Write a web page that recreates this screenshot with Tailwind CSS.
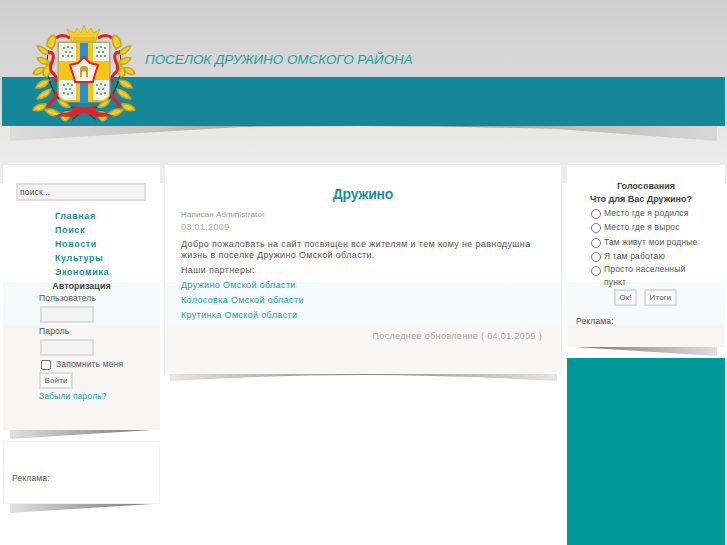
<!DOCTYPE html>
<html lang="ru">
<head>
    <meta charset="UTF-8">
    <title>Поселок Дружино Омского района</title>
    <script src="https://cdn.jsdelivr.net/npm/@tailwindcss/browser@4"></script>
</head>
<body class="relative h-[545px] overflow-hidden bg-white font-['Liberation_Sans',sans-serif] text-[9px] tracking-[0.35px] text-[#555]">

    <!-- Header -->
    <header class="relative h-[165px] bg-[linear-gradient(#cfcfcf,#d6d6d6_50px,#dadada_126px,#e7e7e6_126px,#ececec)]">
        <h1 class="absolute left-[145px] top-[51px] text-[13.4px] leading-[18px] font-normal italic tracking-normal text-[#23a3a0]">ПОСЕЛОК ДРУЖИНО ОМСКОГО РАЙОНА</h1>
        <div class="absolute left-[2px] top-[77px] h-[49px] w-[723px] bg-[#14889a]"></div>
        <svg class="absolute left-[10px] top-[126px]" width="707" height="16" viewBox="0 0 707 16">
            <defs>
                <linearGradient id="hs" x1="0" x2="1" y1="0" y2="0">
                    <stop offset="0" stop-color="#dcdcdc"/>
                    <stop offset="0.2" stop-color="#c4c4c4"/>
                    <stop offset="0.33" stop-color="#a5a5a5"/>
                    <stop offset="0.5" stop-color="#707070"/>
                    <stop offset="0.67" stop-color="#a0a0a0"/>
                    <stop offset="0.8" stop-color="#bdbdbd"/>
                    <stop offset="1" stop-color="#d8d8d8"/>
                </linearGradient>
            </defs>
            <path d="M0 0H707V15L547 3Q450 0 353 0Q270 0 230 1L0 15Z" fill="url(#hs)"/>
        </svg>

        <!-- Coat of arms -->
        <svg class="absolute left-[32px] top-[24px]" width="104" height="98" viewBox="32 24 104 98">
            <g id="side">
                <path d="M72 120L84 110M63 100Q70 110 84 110M48 50Q44 85 62 102" fill="none" stroke="#4a3a20" stroke-width="1.2"/>
                <g fill="#efd02c" stroke="#c7a81e" stroke-width="1.5" stroke-linejoin="round">
                    <path d="M47 46Q47 37 54 35Q58 42 52 49Z"/>
                    <path d="M37 46Q44 46 50 54Q42 56 37 46Z"/>
                    <path d="M37 58Q44 56 50 63Q42 67 37 58Z"/>
                    <path d="M33 74Q36 66 44 68Q42 76 33 74Z"/>
                    <path d="M43 75Q43 68 49 64Q52 71 47 77Z"/>
                    <path d="M36 88Q38 80 49 80Q47 88 36 88Z"/>
                    <path d="M37 99Q41 91 51 89Q49 98 37 99Z"/>
                    <path d="M33 110Q36 103 46 104Q44 113 33 110Z"/>
                    <path d="M45 110Q52 107 60 114Q52 119 45 110Z"/>
                    <path d="M61 117Q63 111 69 112Q72 118 65 121Q62 120 61 117Z"/>
                    <path d="M58 100Q64 99 70 107Q62 109 58 100Z"/>
                </g>
                <path d="M70 38Q62 33 56 38M48 52Q56 52 52 62Q48 70 54 74Q58 78 55 82" fill="none" stroke="#e3212b" stroke-width="3"/>
                <path d="M48 107L58 92" fill="none" stroke="#e3212b" stroke-width="3.5"/>
                <path d="M54 116Q64 112 72 112L73 106L84 108V113L72 117Z" fill="#e3212b"/>
            </g>
            <use href="#side" transform="translate(168 0) scale(-1 1)"/>

            <!-- crown -->
            <path d="M72 42L67 29L74 33L77 28L81 33L84 25L87 33L91 28L94 33L100 29L95 42Z" fill="#f3cf2a" stroke="#c9a414" stroke-width="0.6"/>
            <rect x="73" y="37" width="22" height="5" fill="#e6bd22"/>

            <!-- shield -->
            <path d="M58 42H110V92Q110 102 100 102H68Q58 102 58 92Z" fill="#f5c518" stroke="#9a9a9a" stroke-width="1"/>
            <rect x="80" y="43" width="8" height="59" fill="#2a8fd0"/>
            <path d="M59 43H76V61H59ZM93 43H109V61H93ZM59 80H76V100H68Q59 100 59 92ZM93 80H109V92Q109 100 100 100H93Z" fill="#f4f4ee"/>
            <g fill="#1f8a5a">
                <circle cx="64" cy="48" r="0.9"/><circle cx="68" cy="47" r="0.9"/><circle cx="72" cy="48" r="0.9"/><circle cx="66" cy="52" r="0.9"/><circle cx="70" cy="52" r="0.9"/><circle cx="63" cy="56" r="0.9"/><circle cx="68" cy="56" r="0.9"/><circle cx="72" cy="56" r="0.9"/>
                <circle cx="97" cy="48" r="0.9"/><circle cx="101" cy="47" r="0.9"/><circle cx="105" cy="48" r="0.9"/><circle cx="99" cy="52" r="0.9"/><circle cx="103" cy="52" r="0.9"/><circle cx="97" cy="56" r="0.9"/><circle cx="101" cy="56" r="0.9"/><circle cx="105" cy="56" r="0.9"/>
                <circle cx="64" cy="85" r="0.9"/><circle cx="68" cy="84" r="0.9"/><circle cx="72" cy="85" r="0.9"/><circle cx="66" cy="89" r="0.9"/><circle cx="70" cy="89" r="0.9"/><circle cx="64" cy="93" r="0.9"/><circle cx="68" cy="94" r="0.9"/><circle cx="72" cy="93" r="0.9"/>
                <circle cx="97" cy="85" r="0.9"/><circle cx="101" cy="84" r="0.9"/><circle cx="105" cy="85" r="0.9"/><circle cx="99" cy="89" r="0.9"/><circle cx="103" cy="89" r="0.9"/><circle cx="97" cy="93" r="0.9"/><circle cx="101" cy="94" r="0.9"/><circle cx="105" cy="93" r="0.9"/>
            </g>

            <!-- star -->
            <path d="M84 57L90 63L98 65L95 74L93 82H75L73 74L70 65L78 63Z" fill="#f7f1e6" stroke="#e3212b" stroke-width="2" stroke-linejoin="round"/>
            <path d="M80 77V68L82 66H86L88 68V77H86V71H82V77Z" fill="#c9a13a"/>
        </svg>
    </header>

    <!-- Columns -->
    <main class="flex items-start bg-[linear-gradient(#ececec_18px,#fff_18px)] pl-[3px]">

        <!-- Left column -->
        <aside class="w-[157px] text-[8.5px] tracking-[0.15px]">
            <div class="h-[265px] bg-[linear-gradient(#fff_117px,#f5fafb_117px,#f6f9fa_160px,#f7f6f5_160px)] pt-[18px]">
                <input class="ml-[13px] block h-[18px] w-[130px] border-2 border-[#ddd] bg-[#f3f3f3] px-[2px] text-[8.5px] text-[#555] placeholder:text-[#555]" placeholder="поиск...">
                <ul class="mt-[8px] ml-[52px] text-[9px] leading-[14px] font-bold tracking-[0.6px] text-[#1f8fa0]">
                    <li>Главная</li>
                    <li>Поиск</li>
                    <li>Новости</li>
                    <li>Культуры</li>
                    <li>Экономика</li>
                </ul>
                <h3 class="mt-[1px] text-center text-[9px] leading-[12px] font-bold tracking-normal text-[#444]">Авторизация</h3>
                <div class="pl-[36px]">
                    <label class="block leading-[12px]">Пользователь</label>
                    <input class="mt-[2px] ml-[1px] block h-[17px] w-[54px] border-2 border-[#ddd] bg-[#f3f3f3]">
                    <label class="mt-[2px] block leading-[12px]">Пароль</label>
                    <input class="mt-[2px] ml-[1px] block h-[17px] w-[54px] border-2 border-[#ddd] bg-[#f3f3f3]">
                    <div class="mt-[3px] ml-[2px] flex h-[11px] items-center gap-[5px]">
                        <span class="h-[10px] w-[10px] rounded-[2px] border border-[#777] bg-white"></span>
                        <span>Запомнить меня</span>
                    </div>
                    <button class="mt-[2px] block h-[17px] w-[34px] border-2 border-[#ddd] bg-[#fafafa] text-[8px]">Войти</button>
                    <a class="mt-[1px] block leading-[12px] text-[#2a9aa5]">Забыли пароль?</a>
                </div>
            </div>
            <svg class="ml-[7px] block" width="142" height="10" viewBox="0 0 142 10">
                <defs>
                    <linearGradient id="ss" x1="0" x2="1" y1="0" y2="0">
                        <stop offset="0" stop-color="#e0e0e0"/>
                        <stop offset="0.5" stop-color="#aaa"/>
                        <stop offset="1" stop-color="#777"/>
                    </linearGradient>
                </defs>
                <path d="M0 0H142L0 9Z" fill="url(#ss)"/>
            </svg>
            <div class="mt-[1px] h-[63px] border border-[#f5f5f5] bg-white pt-[30px] pl-[8px]">Реклама:</div>
            <svg class="ml-[7px] block" width="142" height="10" viewBox="0 0 142 10">
                <path d="M0 0H142L0 9Z" fill="url(#ss)"/>
            </svg>
        </aside>

        <!-- Content -->
        <section class="ml-[4px] w-[398px]">
            <div class="h-[209px] border-x border-[#eee] bg-[linear-gradient(#fff_117px,#f5fafb_117px,#f6f9fa_160px,#f8f7f6_160px)] px-[16px]">
                <h2 class="pt-[20px] text-center text-[14px] leading-[18px] font-bold tracking-[-0.2px] text-[#1f8fa0]">Дружино</h2>
                <p class="mt-[6px] text-[8px] leading-[12px] tracking-[0.12px] text-[#999]">Написан Administrator</p>
                <p class="leading-[12px] text-[#aaa]">03.01.2009</p>
                <p class="mt-[6px] leading-[11px]">Добро пожаловать на сайт посвящен все жителям и тем кому не равнодушна жизнь в поселке Дружино Омской области.</p>
                <p class="mt-[3px] leading-[12px]">Наши партнеры:</p>
                <ul class="mt-[2px] leading-[15px] text-[#2a9aa5]">
                    <li>Дружино Омской области</li>
                    <li>Колосовка Омской области</li>
                    <li>Крутинка Омской области</li>
                </ul>
                <p class="mt-[7px] pr-[3px] text-right leading-[12px] text-[#aaa]">Последнее обновление ( 04.01.2009 )</p>
            </div>
            <svg class="ml-[6px] block" width="387" height="7" viewBox="0 0 387 7">
                <defs>
                    <linearGradient id="ms" x1="0" x2="1" y1="0" y2="0">
                        <stop offset="0" stop-color="#e6e6e6"/>
                        <stop offset="0.5" stop-color="#888"/>
                        <stop offset="1" stop-color="#e6e6e6"/>
                    </linearGradient>
                </defs>
                <path d="M0 0H387V7Q280 1 193 1Q100 1 0 7Z" fill="url(#ms)"/>
            </svg>
        </section>

        <!-- Right column -->
        <aside class="ml-[5px] w-[158px] text-[8.5px] tracking-[0.15px]">
            <div class="h-[182px] bg-[linear-gradient(#fff_117px,#f5fafb_117px,#f6f9fa_160px,#f7f6f5_160px)] pt-[15px]">
                <h3 class="text-center text-[9px] leading-[13px] font-bold tracking-normal text-[#444]">Голосования</h3>
                <p class="pr-[10px] text-center text-[9px] leading-[13px] font-bold tracking-normal text-[#444]">Что для Вас Дружино?</p>
                <ul class="ml-[24px] w-[125px] leading-[14.3px]">
                    <li class="flex items-start gap-[3px]"><span class="mt-[3px] h-[10px] w-[10px] shrink-0 rounded-full border border-[#777]"></span>Место где я родился</li>
                    <li class="flex items-start gap-[3px]"><span class="mt-[3px] h-[10px] w-[10px] shrink-0 rounded-full border border-[#777]"></span>Место где я вырос</li>
                    <li class="flex items-start gap-[3px]"><span class="mt-[3px] h-[10px] w-[10px] shrink-0 rounded-full border border-[#777]"></span>Там живут мои родные</li>
                    <li class="flex items-start gap-[3px]"><span class="mt-[3px] h-[10px] w-[10px] shrink-0 rounded-full border border-[#777]"></span>Я там работаю</li>
                    <li class="flex items-start gap-[3px]"><span class="mt-[3px] h-[10px] w-[10px] shrink-0 rounded-full border border-[#777]"></span><span class="w-[85px] leading-[13px]">Просто населенный пункт</span></li>
                </ul>
                <div class="ml-[47px] flex gap-[7px]">
                    <button class="h-[17px] w-[23px] border-2 border-[#ddd] bg-[#fafafa] text-[8px]">Ок!</button>
                    <button class="h-[17px] w-[33px] border-2 border-[#ddd] bg-[#fafafa] text-[8px]">Итоги</button>
                </div>
                <p class="mt-[9px] ml-[9px] leading-[12px]">Реклама:</p>
            </div>
            <svg class="ml-[8px] block" width="142" height="10" viewBox="0 0 142 10">
                <defs>
                    <linearGradient id="rs" x1="0" x2="1" y1="0" y2="0">
                        <stop offset="0" stop-color="#777"/>
                        <stop offset="0.5" stop-color="#aaa"/>
                        <stop offset="1" stop-color="#e0e0e0"/>
                    </linearGradient>
                </defs>
                <path d="M0 0H142V9Z" fill="url(#rs)"/>
            </svg>
            <div class="mt-[1px] h-[190px] bg-[#009999]"></div>
        </aside>
    </main>
</body>
</html>
